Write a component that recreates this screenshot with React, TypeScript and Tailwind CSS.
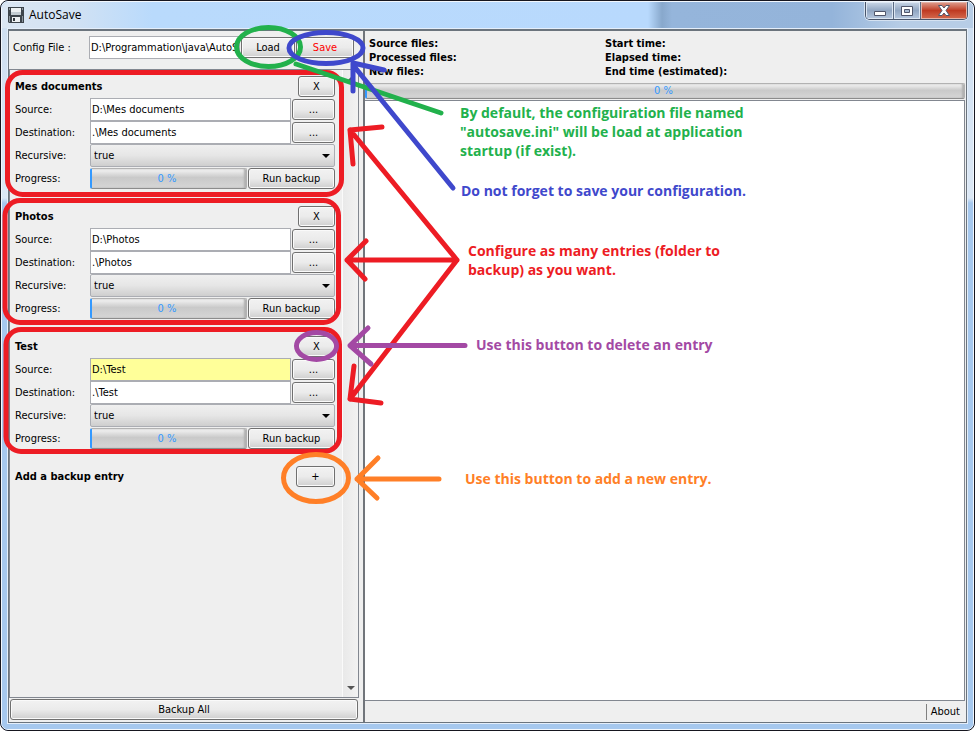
import { useId } from "react";
import type { ReactNode } from "react";

const buttonLook =
  "rounded-[3px] border border-[#707070] bg-linear-to-b from-[#f2f2f2] from-0% via-[#ebebeb] via-50% to-[#cfcfcf] to-100% shadow-[inset_0_0_0_1px_#fafafa] text-center leading-none";

function Button({ children, className = "", label }: { children: ReactNode; className?: string; label?: string }) {
  return (
    <button type="button" aria-label={label} className={`${buttonLook} h-[21px] ${className}`}>
      {children}
    </button>
  );
}

function ProgressBar({ className = "", label }: { className?: string; label: string }) {
  return (
    <div
      role="progressbar"
      aria-label={label}
      aria-valuenow={0}
      className={`flex items-center justify-center rounded-[2px] border border-[#b2b2b2] border-b-[#8c8c8c] border-l-2 border-l-[#3399ff] bg-linear-to-b from-[#f6f6f6] from-0% via-[#c9c9c9] via-45% to-[#d6d6d6] pr-[4px] pb-px leading-none text-[#3399ff] shadow-[inset_-2px_0_2px_#b0b0b0] ${className}`}
    >
      0 %
    </div>
  );
}

type Entry = { name: string; source: string; destination: string; changed?: boolean };

const entries: Entry[] = [
  { name: "Mes documents", source: "D:\\Mes documents", destination: ".\\Mes documents" },
  { name: "Photos", source: "D:\\Photos", destination: ".\\Photos" },
  { name: "Test", source: "D:\\Test", destination: ".\\Test", changed: true },
];

const fieldLook = "h-[23px] min-w-0 flex-1 border border-[#abadb3] px-px outline-none";
const labelLook = "w-[75px] pt-[2px]";

function PathRow({ label, value, tint }: { label: string; value: string; tint: string }) {
  const id = useId();
  return (
    <div className="flex h-[23px] items-center">
      <label htmlFor={id} className={labelLook}>
        {label}
      </label>
      <input id={id} defaultValue={value} className={`${fieldLook} ${tint}`} />
      <Button className="ml-px w-[43px]" label={`Browse ${label}`}>
        ...
      </Button>
    </div>
  );
}

function BackupEntry({ entry }: { entry: Entry }) {
  const id = useId();
  return (
    <section className="mb-[15px]">
      <div className="flex h-[23px] items-center justify-between">
        <h2 className="pt-[2px] font-bold">{entry.name}</h2>
        <Button className="w-[37px]">X</Button>
      </div>
      <PathRow label="Source:" value={entry.source} tint={entry.changed ? "bg-[#ffff99]" : "bg-white"} />
      <PathRow label="Destination:" value={entry.destination} tint="bg-white" />
      <div className="flex h-[23px] items-center">
        <label htmlFor={id} className={labelLook}>
          Recursive:
        </label>
        <div className="relative flex-1">
          <select
            id={id}
            defaultValue="true"
            className="block h-[23px] w-full appearance-none rounded-[2px] border border-[#abadb3] bg-linear-to-b from-[#f0f0f0] via-[#e6e6e6] to-[#cecece] px-[3px] pt-px"
          >
            <option>true</option>
            <option>false</option>
          </select>
          <svg className="pointer-events-none absolute top-[10px] right-[5px]" width="8" height="5" viewBox="0 0 8 5" aria-hidden="true">
            <path d="M0 0h8L4 4z" fill="#000" />
          </svg>
        </div>
      </div>
      <div className="flex h-[23px] items-center">
        <span className={labelLook}>Progress:</span>
        <ProgressBar className="h-[21px] flex-1" label={`${entry.name} progress`} />
        <Button className="ml-px w-[87px]">Run backup</Button>
      </div>
    </section>
  );
}

function Sidebar() {
  return (
    <aside className="flex w-[350px] shrink-0 flex-col">
      <div className="flex h-[38px] items-center pr-[5px] pb-[5px] pl-1">
        <label htmlFor="config" className="w-[76px] pt-[2px]">
          Config File :
        </label>
        <input id="config" defaultValue={"D:\\Programmation\\java\\AutoSave"} className={`${fieldLook} bg-white`} />
        <Button className="ml-px w-[54px]">Load</Button>
        <Button className="ml-px w-[58px] text-[#ff0000]">Save</Button>
      </div>
      <div className="flex min-h-0 flex-1 border border-[#828790]">
        <div className="min-w-0 flex-1 pt-[5px] pr-[7px] pl-[5px]">
          {entries.map((entry) => (
            <BackupEntry key={entry.name} entry={entry} />
          ))}
          <div className="flex h-[23px] items-center justify-between">
            <h2 className="pt-[2px] font-bold">Add a backup entry</h2>
            <Button className="w-[39px]">+</Button>
          </div>
        </div>
        <div className="flex w-[16px] flex-col items-center justify-between border-l border-[#fafafa] bg-linear-to-r from-[#e9e9e9] to-[#f2f2f2] py-[6px]">
          <svg width="8" height="5" viewBox="0 0 8 5" aria-hidden="true">
            <path d="M0 5h8L4 1z" fill="#555" />
          </svg>
          <svg width="8" height="5" viewBox="0 0 8 5" aria-hidden="true">
            <path d="M0 0h8L4 4z" fill="#555" />
          </svg>
        </div>
      </div>
      <div className="flex pt-px pr-px pb-[2px] pl-px">
        <Button className="flex-1">Backup All</Button>
      </div>
    </aside>
  );
}

function Report() {
  return (
    <main className="flex min-w-0 flex-1 flex-col border-l-2 border-[#71757b]">
      <div className="grid h-[52px] grid-cols-[236px_1fr] content-start pt-[6px] pl-1 leading-[14px] font-bold">
        <span>Source files:</span>
        <span>Start time:</span>
        <span>Processed files:</span>
        <span>Elapsed time:</span>
        <span>New files:</span>
        <span>End time (estimated):</span>
      </div>
      <ProgressBar className="mr-px h-[16px]" label="Total progress" />
      <div className="mt-px mr-px flex-1 border border-l-0 border-[#828790] bg-white" />
      <footer className="flex h-[21px] items-center justify-end pr-[6px]">
        <button type="button" className="h-[16px] border-l border-[#808080] pl-1 leading-none">
          About
        </button>
      </footer>
    </main>
  );
}

function TitleBar() {
  return (
    <header className="flex h-[26px] shrink-0 items-center bg-[linear-gradient(90deg,#dbe6f3_0px,#d2e2f3_70px,#b9dafc_150px,#b8d9fd_646px,#88a8cc_660px,#95b5db_670px,#94b4da_830px,#b7cde6_900px)] pl-[6px]">
      <svg width="16" height="16" viewBox="0 0 16 16" aria-hidden="true">
        <path d="M0 0h16v16H1L0 15z" fill="#3d444b" />
        <path d="M3 1h10v7H3z" fill="#eef1f3" />
        <path d="M3 5h10v3H3z" fill="#c4cdd3" />
        <path d="M1 1h1v2H1zM14 1h1v2h-1zM1 9h1v6H1zM14 9h1v6h-1z" fill="#8b959d" />
        <path d="M4 10h8v5H4z" fill="#eef1f3" />
        <path d="M5 11h2v3H5z" fill="#30363c" />
      </svg>
      <h1 className="flex-1 pl-[5px] font-['Open_Sans','Noto_Sans',sans-serif] text-[12px]">AutoSave</h1>
      <div className="mr-[5px] flex h-[18px] self-start overflow-hidden rounded-b-[5px] border border-t-0 border-[#48556b] shadow-[0_0_0_1px_#d5e2f1]">
        <button
          type="button"
          aria-label="Minimize"
          className="flex w-[28px] items-center justify-center border-r border-[#5b6b83] bg-linear-to-b from-[#cbd8e8] via-[#91a6c2] via-50% to-[#b6c8df] shadow-[inset_0_0_0_1px_#dce6f2]"
        >
          <svg width="12" height="12" viewBox="0 0 12 12" aria-hidden="true">
            <path d="M.5 6.500h11v4H.5z" fill="#fff" stroke="#50566b" />
          </svg>
        </button>
        <button
          type="button"
          aria-label="Maximize"
          className="flex w-[27px] items-center justify-center border-r border-[#5b6b83] bg-linear-to-b from-[#cbd8e8] via-[#91a6c2] via-50% to-[#b6c8df] shadow-[inset_0_0_0_1px_#dce6f2]"
        >
          <svg width="12" height="10" viewBox="0 0 12 10" aria-hidden="true">
            <path d="M.5.5h11v9H.5z" fill="#fff" stroke="#50566b" />
            <path d="M3.500 3.500h5v3h-5z" fill="#a9bbd2" stroke="#50566b" />
          </svg>
        </button>
        <button
          type="button"
          aria-label="Close"
          className="flex w-[46px] items-center justify-center bg-linear-to-b from-[#dd9e90] via-[#bf3a22] via-50% to-[#d4684c] shadow-[inset_0_0_0_1px_#e5b3a8]"
        >
          <svg width="12" height="11" viewBox="0 0 12 11" aria-hidden="true">
            <path d="M.5.5h3.500L6 3l2-2.500h3.500L8 5.500l3.500 5H8L6 8l-2 2.500H.5L4 5.500z" fill="#fff" stroke="#50566b" />
          </svg>
        </button>
      </div>
    </header>
  );
}

function Annotations() {
  return (
    <div className="pointer-events-none absolute top-0 left-0 font-['Open_Sans','Noto_Sans',sans-serif] text-[14px] leading-[19px] font-bold">
      <svg width="975" height="731" viewBox="0 0 975 731" fill="none" strokeWidth="5" strokeLinecap="round" strokeLinejoin="round" aria-hidden="true">
        <g stroke="#ed1c24">
          <rect x="7.500" y="72.500" width="334" height="122" rx="15" />
          <rect x="5" y="200.500" width="333.500" height="122" rx="15" />
          <rect x="6" y="329.500" width="333.500" height="122" rx="15" />
          <path d="M457 260L350 130M382 127L350 130L353 164M457 260H347M366 241L347 260L365 279M457 260L350 399M354 366L350 399L381 403" />
        </g>
        <g stroke="#22b14c">
          <ellipse cx="268.500" cy="47" rx="32" ry="19.500" />
          <path d="M296 64L441 113" />
        </g>
        <g stroke="#3f48cc">
          <ellipse cx="326" cy="48" rx="37" ry="15.500" />
          <path d="M453 188L353 65M384 70L353 63V91" />
        </g>
        <g stroke="#a349a4">
          <ellipse cx="316.500" cy="346" rx="20" ry="13.500" />
          <path d="M465 345.500H350M368 328L350 345.500L371 364" />
        </g>
        <g stroke="#ff7f27">
          <ellipse cx="316" cy="478" rx="32.500" ry="23.500" />
          <path d="M439 479H357M378 458L357 479L377 498" />
        </g>
      </svg>
      <p className="absolute top-[103px] left-[460px] whitespace-nowrap text-[#22b14c]">
        By default, the configuiration file named
        <br />
        "autosave.ini" will be load at application
        <br />
        startup (if exist).
      </p>
      <p className="absolute top-[181px] left-[461px] whitespace-nowrap text-[#3f48cc]">Do not forget to save your configuration.</p>
      <p className="absolute top-[241px] left-[468px] whitespace-nowrap text-[#ed1c24]">
        Configure as many entries (folder to
        <br />
        backup) as you want.
      </p>
      <p className="absolute top-[335px] left-[476px] whitespace-nowrap text-[#a349a4]">Use this button to delete an entry</p>
      <p className="absolute top-[469px] left-[465px] whitespace-nowrap text-[#ff7f27]">Use this button to add a new entry.</p>
    </div>
  );
}

export default function App() {
  return (
    <div className="relative flex h-screen flex-col overflow-hidden bg-white font-['DejaVu_Sans_Condensed','DejaVu_Sans',sans-serif] text-[11px] text-black">
      <div className="flex flex-1 flex-col overflow-hidden rounded-[8px] border border-[#16161f] bg-[#a6c8ee]">
        <div className="flex flex-1 flex-col overflow-hidden rounded-[7px] border border-[#f2f7fd]">
          <TitleBar />
          <div className="flex min-h-0 flex-1 bg-[linear-gradient(180deg,#cfdff1_0px,#dce8f5_170px,#a6c8ee_175px)] px-[5px] pb-[5px]">
            <div className="flex min-w-0 flex-1 border border-[#e4eefa]">
              <div className="flex min-w-0 flex-1 border border-t-2 border-[#6b747d] bg-[#efefef]">
                <Sidebar />
                <div className="w-[4px] shrink-0" />
                <Report />
              </div>
            </div>
          </div>
        </div>
      </div>
      <Annotations />
    </div>
  );
}
